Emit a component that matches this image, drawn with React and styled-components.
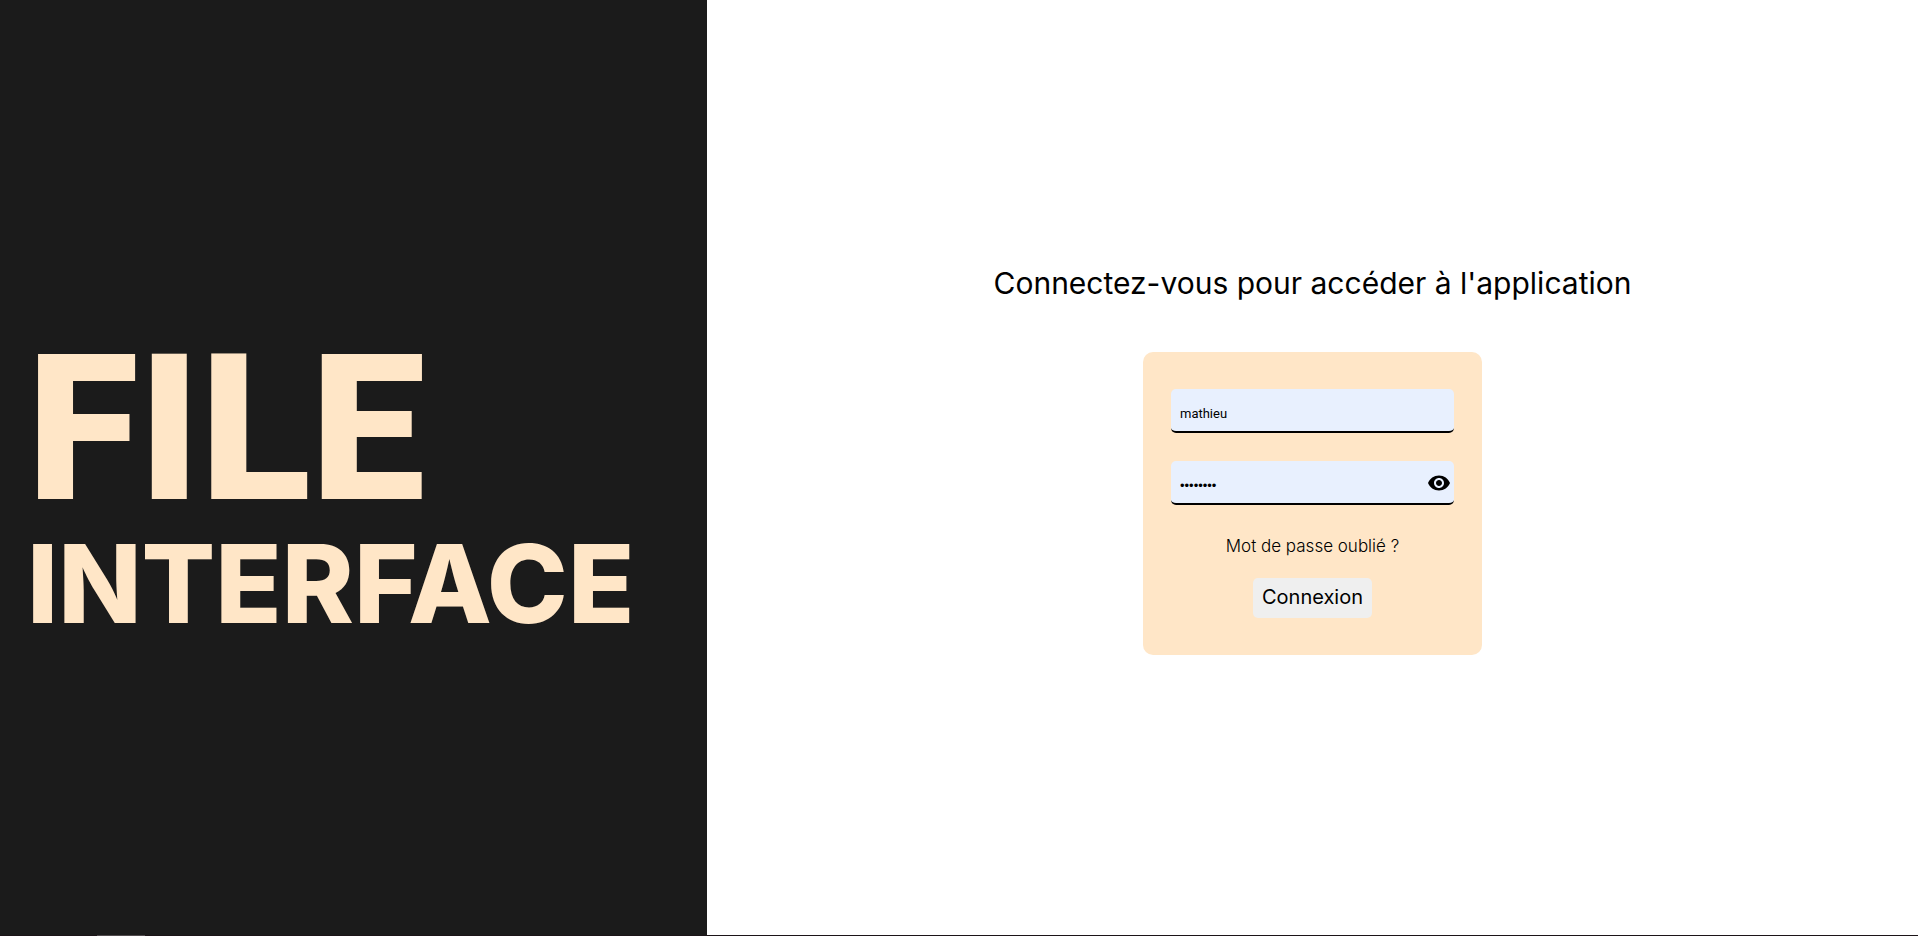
import React, { useState } from 'react';
import styled, { createGlobalStyle } from 'styled-components';
import { MdVisibility, MdVisibilityOff } from 'react-icons/md';

const GlobalStyle = createGlobalStyle`
  *, *::before, *::after { box-sizing: border-box; }
  body {
    margin: 0;
    background: #fff;
    color: #000;
    font-family: Inter, 'Open Sans', sans-serif;
  }
`;

const Page = styled.div`
  display: flex;
  flex-direction: column;
  min-height: 100vh;
`;

const Columns = styled.div`
  flex: 1;
  display: flex;
`;

const BrandPanel = styled.header`
  flex: 0 0 36.86%;
  display: flex;
  flex-direction: column;
  justify-content: center;
  background: #1b1b1b;
`;

const Brand = styled.h1`
  margin: 0;
  padding-left: 27px;
  color: #ffe6c7;
`;

const BrandTop = styled.span`
  display: block;
  font: 900 204px/230px Roboto, sans-serif;
`;

const BrandBottom = styled.span`
  display: block;
  font: 800 109px/76px Inter, sans-serif;
`;

const LoginPanel = styled.main`
  flex: 1;
  display: flex;
  flex-direction: column;
  align-items: center;
  justify-content: center;
  gap: 45px;
  padding-bottom: 21px;
`;

const Title = styled.h2`
  margin: 0;
  font-size: 30px;
  font-weight: 400;
  line-height: 48px;
`;

const Card = styled.form`
  display: flex;
  flex-direction: column;
  align-items: center;
  width: 339px;
  max-width: 100%;
  padding: 37px 28px;
  border-radius: 10px;
  background: #ffe6c7;
`;

const Field = styled.div`
  position: relative;
  width: 100%;
  margin-bottom: 28px;
`;

const Input = styled.input`
  display: block;
  width: 100%;
  height: 44px;
  padding: 6px ${({ $hasAction }) => ($hasAction ? '32px' : '9px')} 0 9px;
  border: 0;
  border-bottom: 2px solid #000;
  border-radius: 5px;
  outline: none;
  background: #e8f0fe;
  color: #000;
  font: 13px Roboto, Arial, sans-serif;

  &[type='password'] {
    font-family: 'Liberation Sans', Arial, sans-serif;
  }
`;

const EyeButton = styled.button`
  position: absolute;
  top: 10px;
  right: 3px;
  display: flex;
  padding: 0;
  border: 0;
  background: none;
  color: #000;
  cursor: pointer;
`;

const ForgotLink = styled.a`
  margin-bottom: 19px;
  color: #000;
  font-size: 17px;
  font-weight: 300;
  line-height: 26px;
  text-decoration: none;
`;

const SubmitButton = styled.button`
  height: 40px;
  padding: 0 9px 2px;
  border: 0;
  border-radius: 5px;
  background: #efefef;
  color: #000;
  font: 400 20px Inter, sans-serif;
  cursor: pointer;
`;

const BottomEdge = styled.footer`
  height: 1px;
  padding-left: 97px;
  background: #1c1418;
`;

const EdgeMark = styled.div`
  width: 48px;
  height: 1px;
  background: #504a4d;
`;

export default function App() {
  const [visible, setVisible] = useState(false);

  return (
    <Page>
      <GlobalStyle />
      <Columns>
        <BrandPanel>
          <Brand>
            <BrandTop>FILE</BrandTop>
            <BrandBottom>INTERFACE</BrandBottom>
          </Brand>
        </BrandPanel>
        <LoginPanel>
          <Title>Connectez-vous pour accéder à l'application</Title>
          <Card onSubmit={(e) => e.preventDefault()}>
            <Field>
              <Input type="text" aria-label="Identifiant" defaultValue="mathieu" />
            </Field>
            <Field>
              <Input
                $hasAction
                type={visible ? 'text' : 'password'}
                aria-label="Mot de passe"
                defaultValue="password"
              />
              <EyeButton
                type="button"
                aria-label="Afficher le mot de passe"
                onClick={() => setVisible(!visible)}
              >
                {visible ? <MdVisibilityOff size={24} /> : <MdVisibility size={24} />}
              </EyeButton>
            </Field>
            <ForgotLink href="#">Mot de passe oublié ?</ForgotLink>
            <SubmitButton type="submit">Connexion</SubmitButton>
          </Card>
        </LoginPanel>
      </Columns>
      <BottomEdge>
        <EdgeMark />
      </BottomEdge>
    </Page>
  );
}
